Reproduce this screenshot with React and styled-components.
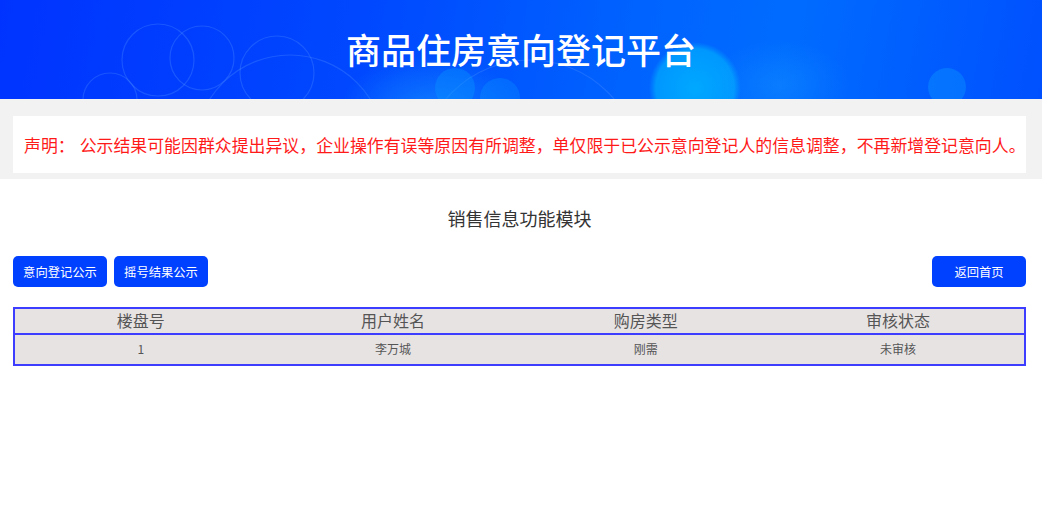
import React from "react";
import styled, { createGlobalStyle } from "styled-components";

const Global = createGlobalStyle`
  html, body { margin: 0; padding: 0; background: #fff; }
  body { font-family: "Noto Sans CJK SC", "Noto Sans", sans-serif; }
  * { box-sizing: border-box; }
`;

const Header = styled.header`
  position: relative;
  height: 99px;
  overflow: hidden;
  display: flex;
  align-items: center;
  justify-content: center;
  background: linear-gradient(100deg, #0033ff 0%, #0048ff 35%, #0062ff 60%, #006cff 75%, #0050ff 100%);
`;

const Bubbles = styled.svg`
  position: absolute;
  inset: 0;
  width: 100%;
  height: 100%;
`;

const Title = styled.h1`
  position: relative;
  margin: 0;
  color: #fff;
  font-size: 35px;
  font-weight: 500;
  line-height: 1;
  padding-bottom: 3px;
`;

const NoticeBand = styled.section`
  background: #f2f2f2;
  padding: 17px 16px 6px 13px;
`;

const NoticeBox = styled.div`
  background: #fff;
  height: 57px;
  display: flex;
  align-items: center;
  padding-left: 11px;
  color: #ff1a1a;
  font-size: 16.9px;
  white-space: nowrap;
`;

const Gap = styled.span`
  display: inline-block;
  width: 5px;
`;

const Main = styled.main`
  padding: 0 16px 0 13px;
`;

const SectionTitle = styled.h2`
  margin: 0;
  padding-top: 26px;
  text-align: center;
  font-size: 18px;
  font-weight: 400;
  color: #333;
  line-height: 26px;
`;

const Toolbar = styled.div`
  display: flex;
  justify-content: space-between;
  margin-top: 25px;
`;

const Group = styled.div`
  display: flex;
  gap: 7px;
`;

const Button = styled.button`
  width: 94px;
  height: 31px;
  border: none;
  border-radius: 5px;
  background: #0040ff;
  color: #fff;
  font-family: inherit;
  font-size: 12.3px;
  padding: 0;
  cursor: pointer;
`;

const Table = styled.table`
  width: 100%;
  margin-top: 20px;
  border-collapse: collapse;
  table-layout: fixed;
  background: #e7e3e3;
  border: 2px solid #3d3dff;
`;

const HeadCell = styled.th`
  height: 26px;
  font-size: 16px;
  font-weight: 400;
  color: #555;
  text-align: center;
  padding: 0 0 3px;
  line-height: 20px;
  border-bottom: 2px solid #3d3dff;
`;

const Cell = styled.td`
  height: 31px;
  font-size: 12px;
  color: #555;
  text-align: center;
  padding: 0 0 2px;
  border-bottom: 1px solid #b9b9f4;
`;

const columns = ["楼盘号", "用户姓名", "购房类型", "审核状态"];
const rows = [["1", "李万城", "刚需", "未审核"]];

export default function App() {
  return (
    <>
      <Global />
      <Header>
        <Bubbles viewBox="0 0 1042 99" preserveAspectRatio="none" aria-hidden="true">
          <defs>
            <radialGradient id="glow" cx="50%" cy="50%" r="50%">
              <stop offset="0%" stopColor="#00b4ff" stopOpacity="0.85" />
              <stop offset="85%" stopColor="#00a8ff" stopOpacity="0.75" />
              <stop offset="100%" stopColor="#00a0ff" stopOpacity="0" />
            </radialGradient>
            <radialGradient id="soft" cx="50%" cy="50%" r="50%">
              <stop offset="0%" stopColor="#1a9dff" stopOpacity="0.55" />
              <stop offset="100%" stopColor="#1a9dff" stopOpacity="0" />
            </radialGradient>
          </defs>
          <g fill="none" stroke="#5a9cff" strokeOpacity="0.28" strokeWidth="1.2">
            <circle cx="158" cy="60" r="36" />
            <circle cx="202" cy="58" r="32" />
            <circle cx="277" cy="73" r="37" />
            <circle cx="110" cy="100" r="27" />
            <circle cx="290" cy="150" r="95" />
            <circle cx="530" cy="170" r="110" />
          </g>
          <ellipse cx="430" cy="110" rx="90" ry="55" fill="url(#soft)" />
          <circle cx="455" cy="88" r="20" fill="#0a9cff" opacity="0.35" />
          <circle cx="500" cy="98" r="20" fill="#0a9cff" opacity="0.3" />
          <circle cx="695" cy="88" r="46" fill="url(#glow)" />
          <ellipse cx="780" cy="85" rx="70" ry="45" fill="url(#soft)" opacity="0.6" />
          <circle cx="947" cy="87" r="19" fill="#0a8cff" opacity="0.5" />
        </Bubbles>
        <Title>商品住房意向登记平台</Title>
      </Header>
      <NoticeBand>
        <NoticeBox>
          声明：<Gap />公示结果可能因群众提出异议，企业操作有误等原因有所调整，单仅限于已公示意向登记人的信息调整，不再新增登记意向人。
        </NoticeBox>
      </NoticeBand>
      <Main>
        <SectionTitle>销售信息功能模块</SectionTitle>
        <Toolbar>
          <Group>
            <Button>意向登记公示</Button>
            <Button>摇号结果公示</Button>
          </Group>
          <Button>返回首页</Button>
        </Toolbar>
        <Table>
          <thead>
            <tr>
              {columns.map((c) => (
                <HeadCell key={c}>{c}</HeadCell>
              ))}
            </tr>
          </thead>
          <tbody>
            {rows.map((r, i) => (
              <tr key={i}>
                {r.map((v, j) => (
                  <Cell key={j}>{v}</Cell>
                ))}
              </tr>
            ))}
          </tbody>
        </Table>
      </Main>
    </>
  );
}
